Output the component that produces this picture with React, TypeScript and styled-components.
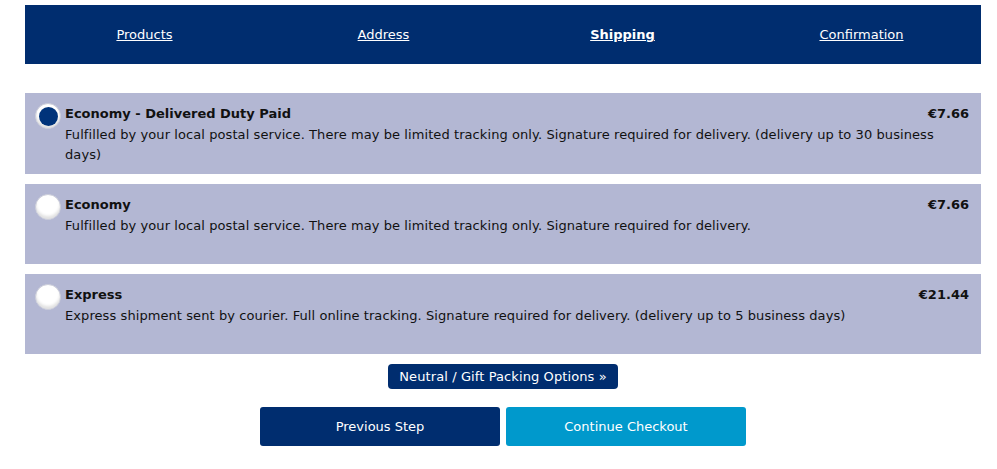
import React, { useState } from "react";
import styled, { createGlobalStyle } from "styled-components";

const Global = createGlobalStyle`
  html, body { margin: 0; padding: 0; background: #fff; }
  body { font-family: Verdana, "DejaVu Sans", sans-serif; font-size: 13px; color: #111; }
`;

const Page = styled.div`
  padding: 5px 16px 0 25px;
  width: 956px;
`;

const Nav = styled.nav`
  display: grid;
  grid-template-columns: repeat(4, 1fr);
  height: 59px;
  background: #002d6f;
  align-items: center;
`;

const NavLink = styled.a<{ $active?: boolean }>`
  justify-self: center;
  color: #fff;
  text-decoration: underline;
  font-size: 13px;
  font-weight: ${(p) => (p.$active ? 700 : 400)};
  cursor: pointer;
`;

const Options = styled.div`
  display: flex;
  flex-direction: column;
  gap: 10px;
  margin-top: 29px;
`;

const Card = styled.label`
  display: flex;
  align-items: flex-start;
  min-height: 80px;
  box-sizing: border-box;
  background: #b3b7d3;
  padding: 10px 12px 9px 10px;
  cursor: pointer;
`;

const Radio = styled.span<{ $checked?: boolean }>`
  flex: none;
  width: 26px;
  height: 26px;
  box-sizing: border-box;
  border-radius: 50%;
  background: #fff;
  border: 1px solid #c9cbd8;
  box-shadow: inset 0 -3px 3px rgba(0, 0, 0, 0.12);
  display: flex;
  align-items: center;
  justify-content: center;
  margin-right: 4px;
  &::after {
    content: "";
    display: ${(p) => (p.$checked ? "block" : "none")};
    width: 19px;
    height: 19px;
    border-radius: 50%;
    background: #00337a;
  }
`;

const Body = styled.div`
  flex: 1;
  padding-top: 1px;
  letter-spacing: 0.08px;
`;

const Head = styled.div`
  display: flex;
  justify-content: space-between;
  font-weight: 700;
  line-height: 19px;
  letter-spacing: 0;
`;

const Desc = styled.div`
  line-height: 20px;
  margin-top: 2px;
`;

const Center = styled.div`
  display: flex;
  justify-content: center;
  margin-top: 10px;
`;

const GiftButton = styled.button`
  background: #002d6f;
  color: #fff;
  border: none;
  border-radius: 4px;
  height: 25px;
  padding: 0 11px;
  font-family: inherit;
  font-size: 13px;
  letter-spacing: 0.1px;
`;

const Actions = styled.div`
  display: flex;
  justify-content: center;
  gap: 6px;
  margin-top: 18px;
`;

const StepButton = styled.button<{ $primary?: boolean }>`
  width: 240px;
  height: 39px;
  border: none;
  border-radius: 3px;
  color: #fff;
  background: ${(p) => (p.$primary ? "#0099cc" : "#002d6f")};
  font-family: inherit;
  font-size: 13px;
`;

const options = [
  {
    title: "Economy - Delivered Duty Paid",
    price: "€7.66",
    desc: "Fulfilled by your local postal service. There may be limited tracking only. Signature required for delivery. (delivery up to 30 business days)",
  },
  {
    title: "Economy",
    price: "€7.66",
    desc: "Fulfilled by your local postal service. There may be limited tracking only. Signature required for delivery.",
  },
  {
    title: "Express",
    price: "€21.44",
    desc: "Express shipment sent by courier. Full online tracking. Signature required for delivery. (delivery up to 5 business days)",
  },
];

export default function App() {
  const [sel, setSel] = useState(0);
  return (
    <Page>
      <Global />
      <Nav>
        <NavLink>Products</NavLink>
        <NavLink>Address</NavLink>
        <NavLink $active>Shipping</NavLink>
        <NavLink>Confirmation</NavLink>
      </Nav>
      <Options>
        {options.map((o, i) => (
          <Card key={o.title} onClick={() => setSel(i)}>
            <Radio $checked={sel === i} />
            <Body>
              <Head>
                <span>{o.title}</span>
                <span>{o.price}</span>
              </Head>
              <Desc>{o.desc}</Desc>
            </Body>
          </Card>
        ))}
      </Options>
      <Center>
        <GiftButton>Neutral / Gift Packing Options »</GiftButton>
      </Center>
      <Actions>
        <StepButton>Previous Step</StepButton>
        <StepButton $primary>Continue Checkout</StepButton>
      </Actions>
    </Page>
  );
}
